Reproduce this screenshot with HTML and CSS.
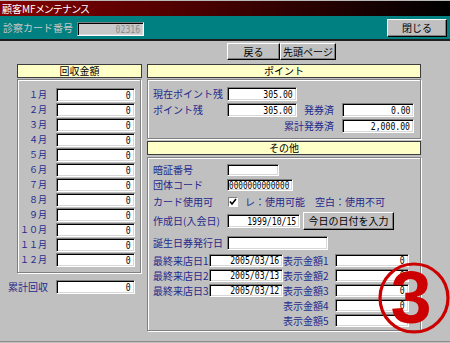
FILE: index.html
```html
<!DOCTYPE html>
<html lang="ja">
<head>
  <meta charset="UTF-8">
  <title>顧客MFメンテナンス</title>
  <link rel="stylesheet" href="styles.css">
</head>
<body>
  <div class="titlebar">顧客MFメンテナンス</div>

  <!-- カード番号バー -->
  <div class="cardbar">
    <span class="card-label">診察カード番号</span>
    <div class="fld card-no"><span class="num">02316</span></div>
    <button class="btn close-btn">閉じる</button>
  </div>

  <div class="toolbar">
    <button class="btn nav-btn back">戻る</button>
    <button class="btn nav-btn first">先頭ページ</button>
  </div>

  <div class="main">
    <!-- 回収金額 -->
    <div class="col-left">
      <div class="sec-head">回収金額</div>
      <div class="group months">
        <div class="m-row"><span class="m-lbl">１月</span><div class="fld m-fld"><span class="num">0</span></div></div>
        <div class="m-row"><span class="m-lbl">２月</span><div class="fld m-fld"><span class="num">0</span></div></div>
        <div class="m-row"><span class="m-lbl">３月</span><div class="fld m-fld"><span class="num">0</span></div></div>
        <div class="m-row"><span class="m-lbl">４月</span><div class="fld m-fld"><span class="num">0</span></div></div>
        <div class="m-row"><span class="m-lbl">５月</span><div class="fld m-fld"><span class="num">0</span></div></div>
        <div class="m-row"><span class="m-lbl">６月</span><div class="fld m-fld"><span class="num">0</span></div></div>
        <div class="m-row"><span class="m-lbl">７月</span><div class="fld m-fld"><span class="num">0</span></div></div>
        <div class="m-row"><span class="m-lbl">８月</span><div class="fld m-fld"><span class="num">0</span></div></div>
        <div class="m-row"><span class="m-lbl">９月</span><div class="fld m-fld"><span class="num">0</span></div></div>
        <div class="m-row"><span class="m-lbl">１０月</span><div class="fld m-fld"><span class="num">0</span></div></div>
        <div class="m-row"><span class="m-lbl">１１月</span><div class="fld m-fld"><span class="num">0</span></div></div>
        <div class="m-row"><span class="m-lbl">１２月</span><div class="fld m-fld"><span class="num">0</span></div></div>
      </div>
      <div class="total-row">
        <span class="total-lbl">累計回収</span>
        <div class="fld m-fld"><span class="num">0</span></div>
      </div>
    </div>

    <div class="col-right">
      <!-- ポイント -->
      <div class="sec-head">ポイント</div>
      <div class="group points">
        <span class="lbl a1">現在ポイント残</span>
        <div class="fld p-fld f1"><span class="num">305.00</span></div>
        <span class="lbl a2">ポイント残</span>
        <div class="fld p-fld f2"><span class="num">305.00</span></div>
        <span class="lbl r-lbl b2">発券済</span>
        <div class="fld p-fld g2"><span class="num">0.00</span></div>
        <span class="lbl r-lbl b3">累計発券済</span>
        <div class="fld p-fld g3"><span class="num">2,000.00</span></div>
      </div>

      <!-- その他 -->
      <div class="sec-head other-head">その他</div>
      <div class="group others">
        <div class="o-row r-pin">
          <span class="lbl o-lbl">暗証番号</span>
          <div class="fld pin-fld"></div>
        </div>
        <div class="o-row r-group">
          <span class="lbl o-lbl">団体コード</span>
          <div class="fld fld-left code-fld"><span class="num">0000000000000</span></div>
        </div>
        <div class="o-row r-card">
          <span class="lbl o-lbl">カード使用可</span>
          <span class="check">
            <svg width="8" height="8" viewBox="0 0 8 8"><path d="M1 3.5 L3 6 L7 1" fill="none" stroke="#000" stroke-width="1.6"/></svg>
          </span>
          <span class="lbl check-note">レ：使用可能　空白：使用不可</span>
        </div>
        <div class="o-row r-made">
          <span class="lbl o-lbl">作成日(入会日)</span>
          <div class="fld made-fld"><span class="num">1999/10/15</span></div>
          <button class="btn today-btn">今日の日付を入力</button>
        </div>
        <div class="o-row r-birth">
          <span class="lbl o-lbl">誕生日券発行日</span>
          <div class="fld birth-fld"></div>
        </div>

        <div class="visits">
          <span class="lbl">最終来店日1</span>
          <div class="fld v-fld"><span class="num">2005/03/16</span></div>
          <span class="lbl">表示金額1</span>
          <div class="fld v-fld"><span class="num">0</span></div>

          <span class="lbl">最終来店日2</span>
          <div class="fld v-fld"><span class="num">2005/03/13</span></div>
          <span class="lbl">表示金額2</span>
          <div class="fld v-fld"><span class="num">0</span></div>

          <span class="lbl">最終来店日3</span>
          <div class="fld v-fld"><span class="num">2005/03/12</span></div>
          <span class="lbl">表示金額3</span>
          <div class="fld v-fld"><span class="num">0</span></div>

          <span class="lbl amt-only">表示金額4</span>
          <div class="fld v-fld"><span class="num">0</span></div>

          <span class="lbl amt-only">表示金額5</span>
          <div class="fld v-fld"></div>
        </div>
      </div>
    </div>
  </div>

  <div class="statusline"></div>

  <!-- ページ番号スタンプ -->
  <div class="stamp">
    <svg width="72" height="72" viewBox="0 0 72 72"><circle cx="36" cy="36" r="34" fill="none" stroke="#cc0000" stroke-width="3.2"/></svg>
    <span class="stamp-num">3</span>
  </div>
</body>
</html>
```

FILE: styles.css
```css
* { box-sizing: border-box; }
body {
  margin: 0;
  width: 450px;
  height: 343px;
  overflow: hidden;
  position: relative;
  background: #c0c0c0;
  font-family: "Noto Sans CJK JP", "Noto Sans", sans-serif;
  font-size: 10px;
  color: #000;
}

/* タイトルバー */
.titlebar {
  height: 16px;
  border-top: 1px solid #b8b8b8;
  background: linear-gradient(to right, #840000, #000);
  color: #fff;
  line-height: 15px;
  padding-left: 2px;
  font-feature-settings: "palt";
}

.cardbar {
  display: flex;
  align-items: flex-start;
  height: 25px;
  background: #008080;
  border-bottom: 2px solid #1e1e1e;
}
.card-label {
  width: 77px;
  padding-left: 3px;
  line-height: 23px;
  color: #c8c8c8;
}
.card-no {
  width: 67px;
  height: 14px;
  margin-top: 6px;
  background: #c8c8c8 !important;
  color: #8c8c8c;
}

/* ボタン */
.btn {
  padding: 0;
  font-family: inherit;
  font-size: 10px;
  color: #000;
  background: #c0c0c0;
  border-top: 1px solid #fff;
  border-left: 1px solid #fff;
  border-right: 1px solid #000;
  border-bottom: 1px solid #000;
  box-shadow: inset -1px -1px 0 #808080;
  line-height: 1;
}
.close-btn {
  width: 60px;
  height: 18px;
  margin: 3px 3px 0 auto;
}

.toolbar {
  display: flex;
  height: 23px;
  padding: 2px 0 0 227px;
}
.nav-btn { height: 17px; }
.back { width: 53px; }
.first { width: 56px; }

/* 入力欄 */
.fld {
  display: flex;
  align-items: center;
  justify-content: flex-end;
  background: #fff;
  border-top: 1px solid #808080;
  border-left: 1px solid #808080;
  border-right: 1px solid #fff;
  border-bottom: 1px solid #fff;
  box-shadow: inset 1px 1px 0 #000, inset -1px -1px 0 #d8d8d8;
  padding: 0 3px 0 2px;
  overflow: hidden;
}
.fld-left { justify-content: flex-start; }
.num {
  display: inline-block;
  font-family: "DejaVu Sans Mono", monospace;
  font-size: 11px;
  line-height: 1;
  white-space: nowrap;
  transform: scaleX(.74);
  transform-origin: right center;
}
.fld-left .num {
  transform: scaleX(.7);
  transform-origin: left center;
}

.lbl {
  color: #1f2a8c;
  line-height: 14px;
  white-space: nowrap;
}

.sec-head {
  height: 14px;
  background: #ffffc8;
  border: 1px solid #3c3c3c;
  text-align: center;
  line-height: 12px;
}

.group {
  border: 1px solid #808080;
  box-shadow: inset 1px 1px 0 #fff, 1px 1px 0 #fff;
}

.main {
  display: flex;
  align-items: flex-start;
}

/* 左列 */
.col-left { width: 142px; }
.col-left .sec-head {
  width: 125px;
  margin-left: 17px;
}
.months {
  width: 124px;
  height: 194px;
  margin: 1px 0 0 17px;
  padding-top: 8px;
}
.m-row {
  display: flex;
  align-items: flex-start;
  height: 15px;
}
.m-lbl {
  width: 29px;
  margin-right: 9px;
  text-align: right;
  white-space: nowrap;
  font-size: 9px;
  color: #1f2a8c;
  line-height: 14px;
}
.m-fld {
  width: 79px;
  height: 14px;
}
.total-row {
  display: flex;
  margin-top: 7px;
  padding-left: 8px;
}
.total-lbl {
  width: 48px;
  color: #1f2a8c;
  line-height: 14px;
}

/* 右列 */
.col-right {
  width: 274px;
  margin-left: 5px;
}
.points {
  height: 60px;
  margin-top: 1px;
  padding: 7px 0 0 5px;
  display: grid;
  grid-template-columns: 74px 70px 45px 72px;
  grid-template-rows: repeat(3, 16px);
  grid-template-areas:
    "a1 f1 . ."
    "a2 f2 b2 g2"
    "b3 b3 b3 g3";
  align-items: start;
}
.a1 { grid-area: a1; }
.a2 { grid-area: a2; }
.b2 { grid-area: b2; }
.b3 { grid-area: b3; }
.f1 { grid-area: f1; }
.f2 { grid-area: f2; }
.g2 { grid-area: g2; }
.g3 { grid-area: g3; }
.r-lbl {
  text-align: right;
  padding-right: 8px;
}
.p-fld { height: 14px; }

.other-head { margin-top: 2px; }
.others {
  height: 174px;
  margin-top: 2px;
  padding: 6px 0 0 5px;
}
.o-row {
  display: flex;
  align-items: center;
}
.o-lbl { width: 74px; }
.r-pin { height: 12px; margin-bottom: 3px; }
.r-group { height: 12px; }
.r-card { height: 16px; margin-top: 3px; }
.r-made { height: 18px; margin-top: 2px; }
.r-birth { height: 14px; margin-top: 6px; }
.pin-fld { width: 52px; height: 12px; }
.code-fld {
  width: 66px;
  height: 12px;
  padding-left: 1px;
}
.check {
  width: 10px;
  height: 10px;
  margin-left: 1px;
  display: flex;
  align-items: center;
  justify-content: center;
  background: #fff;
  border-top: 1px solid #808080;
  border-left: 1px solid #808080;
  border-right: 1px solid #fff;
  border-bottom: 1px solid #fff;
}
.check svg { display: block; }
.check-note { margin-left: 7px; }
.made-fld { width: 73px; height: 14px; }
.today-btn {
  width: 91px;
  height: 18px;
  margin-left: 3px;
}
.birth-fld { width: 101px; height: 14px; }

.visits {
  display: grid;
  grid-template-columns: 56px 74px 52px 74px;
  grid-auto-rows: 15px;
  align-items: center;
  margin-top: 3px;
}
.amt-only { grid-column: 3; }
.v-fld { height: 13px; }

.statusline {
  margin-top: 10px;
  border-top: 1px solid #8c8c8c;
  height: 2px;
}

/* 丸数字スタンプ */
.stamp {
  position: absolute;
  left: 378px;
  top: 262px;
  width: 72px;
  height: 72px;
}
.stamp svg {
  position: absolute;
  left: 0;
  top: 0;
}
.stamp-num {
  position: absolute;
  left: 0;
  top: -1px;
  width: 66px;
  text-align: center;
  font-family: "Liberation Sans", Arial, sans-serif;
  font-weight: bold;
  font-size: 74px;
  line-height: 74px;
  color: #cc0000;
}
```
